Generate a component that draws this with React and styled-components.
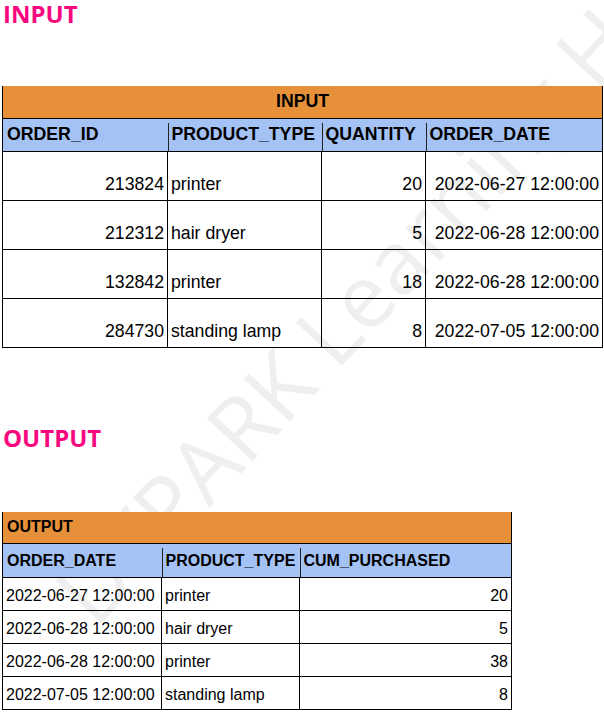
import React from "react";
import styled, { createGlobalStyle } from "styled-components";

const GlobalStyle = createGlobalStyle`
  html, body {
    margin: 0;
    padding: 0;
    background: #ffffff;
  }
`;

const Page = styled.div`
  position: relative;
  width: 604px;
  height: 717px;
  overflow: hidden;
  padding: 0 2px;
  box-sizing: border-box;
  font-family: "Liberation Sans", Arial, sans-serif;
  color: #000;
`;

const Watermark = styled.div`
  position: absolute;
  left: 380px;
  top: 275px;
  transform: translate(-50%, -50%) rotate(-47deg);
  font-family: "Open Sans", "Noto Sans", sans-serif;
  font-size: 88px;
  white-space: nowrap;
  color: #efefef;
  pointer-events: none;
  z-index: 0;
`;

const Content = styled.div`
  position: relative;
  z-index: 1;
  padding-top: 2px;
`;

const Title = styled.h1`
  margin: 0;
  margin-top: ${(p) => p.$top}px;
  padding-left: 1px;
  font-family: "Open Sans", "Noto Sans", sans-serif;
  font-weight: 700;
  font-size: 24px;
  line-height: 24px;
  color: #f9077f;
`;

const Table = styled.table`
  margin-top: ${(p) => p.$top}px;
  width: ${(p) => p.$width}px;
  border-collapse: collapse;
  table-layout: fixed;
  border-left: 1px solid #000;
  border-right: 1px solid #000;
  font-size: ${(p) => p.$font}px;
`;

const Banner = styled.th`
  background: #e6913a;
  height: 32px;
  padding: 0 4px;
  box-sizing: border-box;
  text-align: ${(p) => p.$align};
  font-weight: 700;
  font-size: inherit;
  border-bottom: 1px solid #000;
`;

const Head = styled.th`
  position: relative;
  background: #a4c2f4;
  height: ${(p) => p.$h}px;
  padding: 0 4px;
  box-sizing: border-box;
  text-align: left;
  font-weight: 700;
  font-size: inherit;
  white-space: nowrap;
  overflow: hidden;
  border-bottom: 1px solid #000;
  &:not(:first-child)::before {
    content: "";
    position: absolute;
    left: 0;
    top: 4px;
    bottom: 0;
    width: 1px;
    background: #222;
  }
`;

const Cell = styled.td`
  height: ${(p) => p.$h}px;
  padding: 0 3px ${(p) => p.$pb}px 3px;
  box-sizing: border-box;
  vertical-align: bottom;
  text-align: ${(p) => (p.$right ? "right" : "left")};
  white-space: nowrap;
  border: 1px solid #000;
  border-top: none;
  &:first-child {
    border-left: none;
  }
  &:last-child {
    border-right: none;
  }
`;

const inputCols = [
  { name: "ORDER_ID", w: 165, right: true },
  { name: "PRODUCT_TYPE", w: 154 },
  { name: "QUANTITY", w: 104, right: true },
  { name: "ORDER_DATE", w: 177, right: true },
];

const inputRows = [
  ["213824", "printer", "20", "2022-06-27 12:00:00"],
  ["212312", "hair dryer", "5", "2022-06-28 12:00:00"],
  ["132842", "printer", "18", "2022-06-28 12:00:00"],
  ["284730", "standing lamp", "8", "2022-07-05 12:00:00"],
];

const outputCols = [
  { name: "ORDER_DATE", w: 159 },
  { name: "PRODUCT_TYPE", w: 138 },
  { name: "CUM_PURCHASED", w: 212, right: true },
];

const outputRows = [
  ["2022-06-27 12:00:00", "printer", "20"],
  ["2022-06-28 12:00:00", "hair dryer", "5"],
  ["2022-06-28 12:00:00", "printer", "38"],
  ["2022-07-05 12:00:00", "standing lamp", "8"],
];

const DataTable = ({ top, width, font, title, align, cols, rows, headH, rowH, pb }) => (
  <Table $top={top} $width={width} $font={font}>
    <colgroup>
      {cols.map((c) => (
        <col key={c.name} style={{ width: c.w }} />
      ))}
    </colgroup>
    <thead>
      <tr>
        <Banner colSpan={cols.length} $align={align}>
          {title}
        </Banner>
      </tr>
      <tr>
        {cols.map((c) => (
          <Head key={c.name} $h={headH}>
            {c.name}
          </Head>
        ))}
      </tr>
    </thead>
    <tbody>
      {rows.map((r, i) => (
        <tr key={i}>
          {r.map((v, j) => (
            <Cell key={j} $h={rowH} $pb={pb} $right={cols[j].right}>
              {v}
            </Cell>
          ))}
        </tr>
      ))}
    </tbody>
  </Table>
);

export default function App() {
  return (
    <>
      <GlobalStyle />
      <Page>
        <Watermark>DYPARK Learning Hub</Watermark>
        <Content>
          <Title $top={0}>INPUT</Title>
          <DataTable
            top={60}
            width={600}
            font={17.7}
            title="INPUT"
            align="center"
            cols={inputCols}
            rows={inputRows}
            headH={33}
            rowH={49}
            pb={5}
          />
          <Title $top={78}>OUTPUT</Title>
          <DataTable
            top={62}
            width={509}
            font={16}
            title="OUTPUT"
            align="left"
            cols={outputCols}
            rows={outputRows}
            headH={34}
            rowH={33}
            pb={5}
          />
        </Content>
      </Page>
    </>
  );
}
